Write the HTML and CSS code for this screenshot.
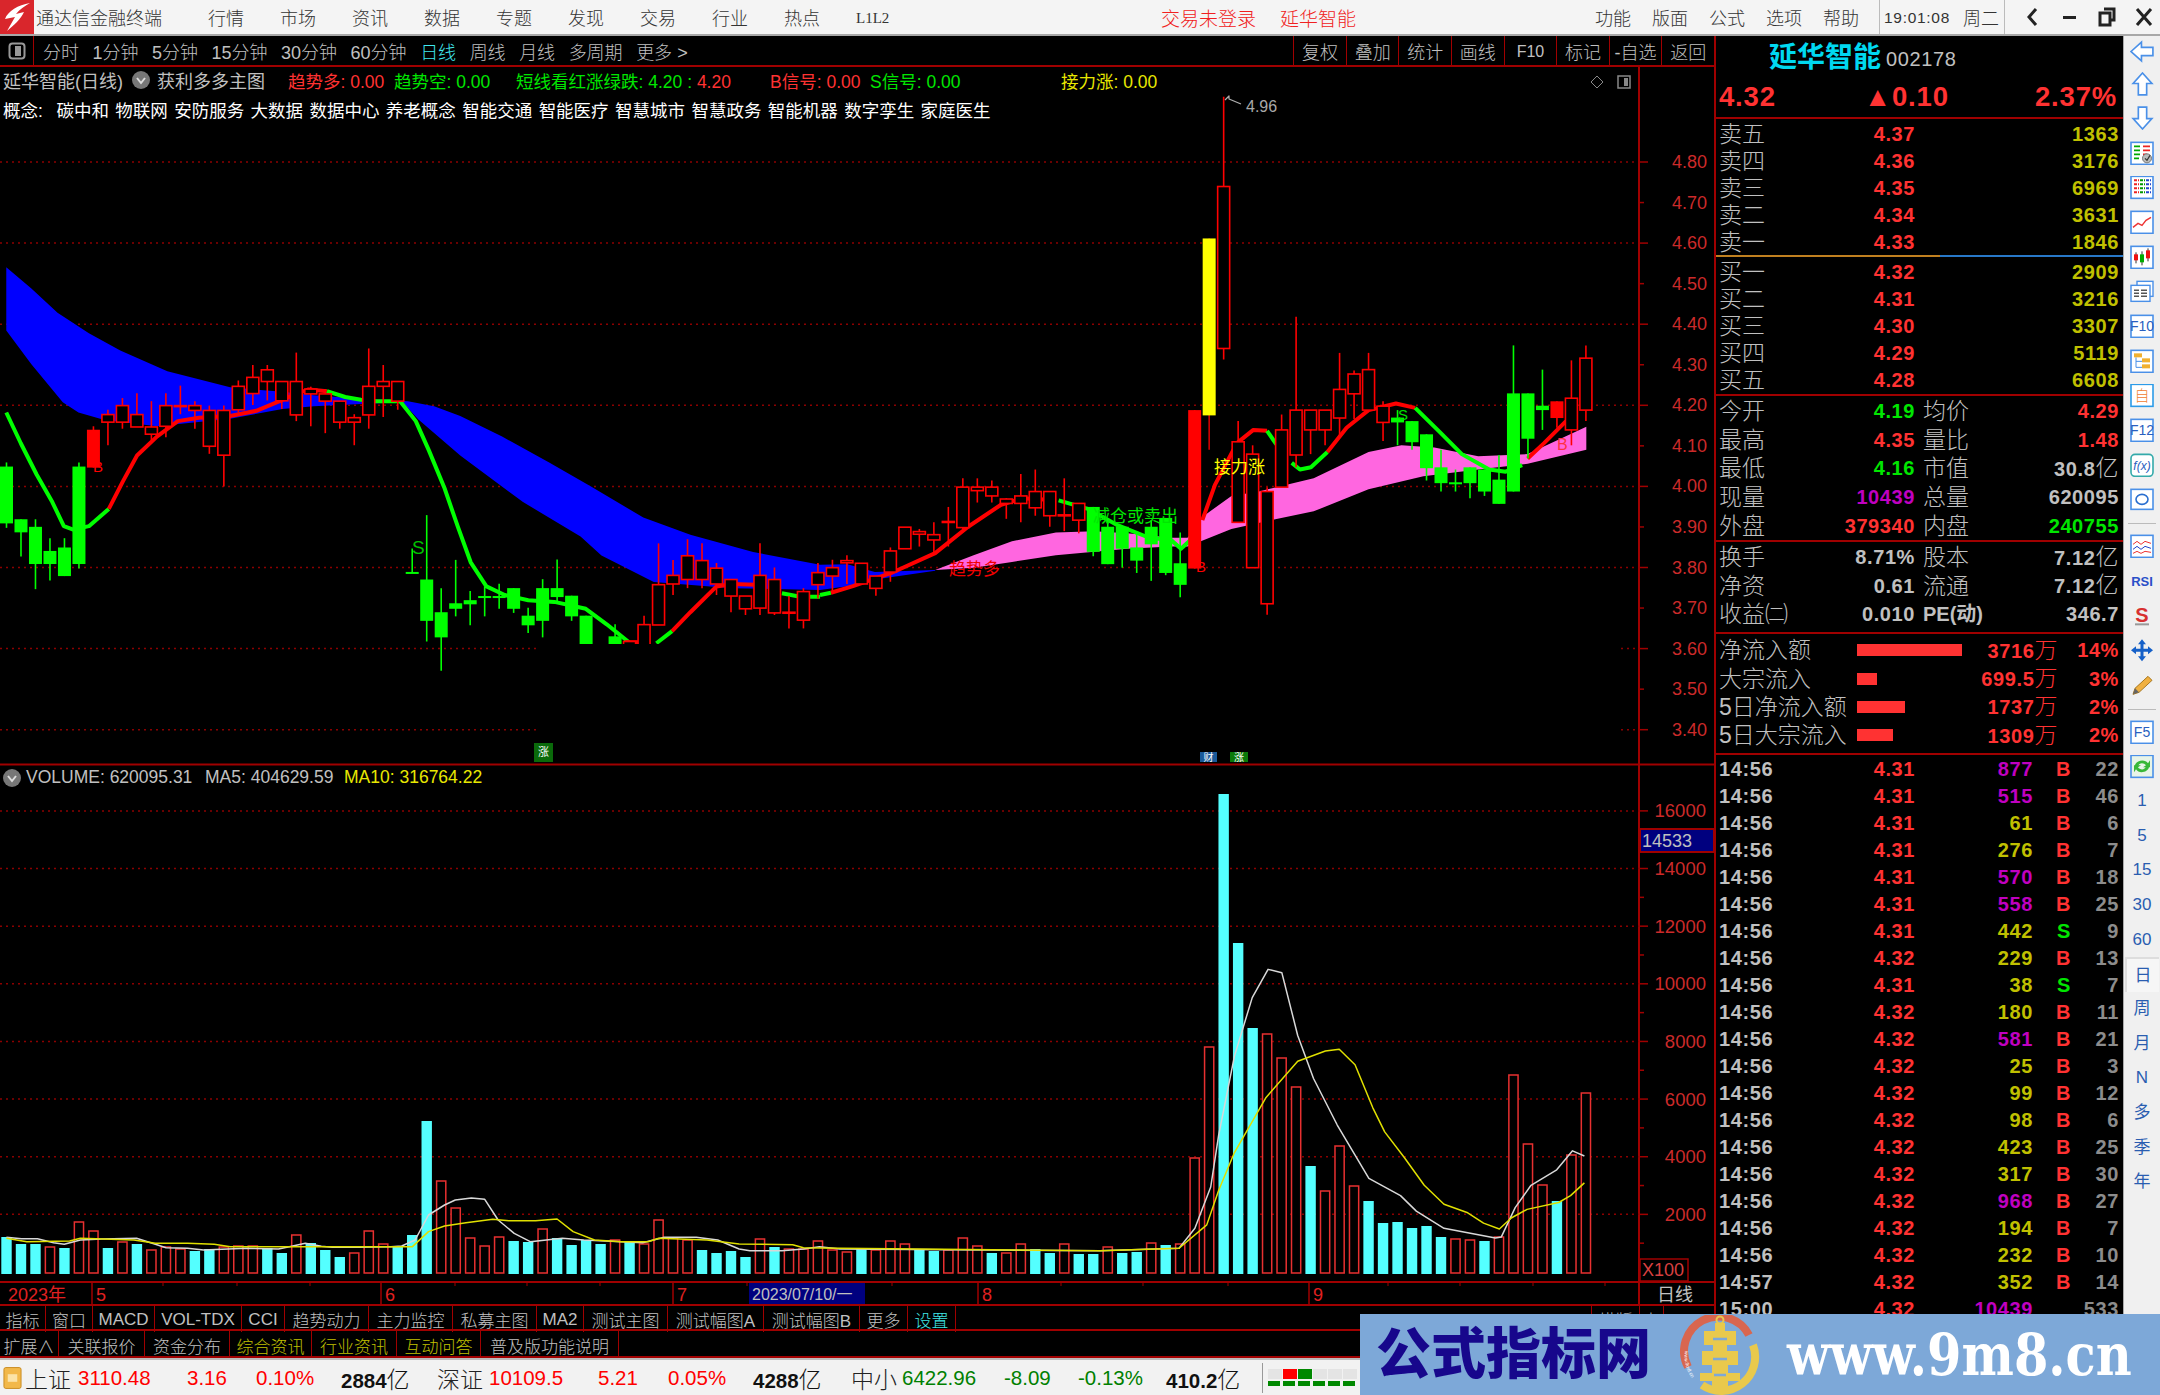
FILE: index.html
```html
<!DOCTYPE html>
<html lang="zh-CN">
<head>
  <meta charset="UTF-8" />
  <title>通达信金融终端</title>
  <link rel="stylesheet" href="styles.css">
</head>
<body>
  <div class="app">
    <header class="titlebar">
      <svg class="logo" viewBox="0 0 34 34">
        <rect width="34" height="34" fill="#d9262c"/>
        <path d="M30 3 C18 5 8 11 5 19 L15 17 L7 31 C14 25 21 19 24 12 L16 14 C20 9 25 6 30 3Z" fill="#fff"/>
      </svg>
      <span class="appname">通达信金融终端</span>
      <nav class="menu">
        <span>行情</span><span>市场</span><span>资讯</span><span>数据</span><span>专题</span>
        <span>发现</span><span>交易</span><span>行业</span><span>热点</span><span class="l1l2">L1L2</span>
      </nav>
      <div class="alerts"><span>交易未登录</span><span>延华智能</span></div>
      <nav class="menu menu-right">
        <span>功能</span><span>版面</span><span>公式</span><span>选项</span><span>帮助</span>
      </nav>
      <div class="clock"><span class="time">19:01:08</span><span>周二</span></div>
      <div class="winbtns">
        <svg viewBox="0 0 20 20"><path d="M13 2 L6 10 L13 18" fill="none" stroke="#222" stroke-width="3"/></svg>
        <svg viewBox="0 0 20 20"><rect x="3" y="9" width="13" height="3" fill="#222"/></svg>
        <svg viewBox="0 0 20 20"><path d="M7 2 H17 V13 H14 M3 6 H13 V18 H3 Z" fill="none" stroke="#222" stroke-width="3"/></svg>
        <svg viewBox="0 0 20 20"><path d="M3 2 L17 18 M17 2 L3 18" stroke="#222" stroke-width="3"/></svg>
      </div>
    </header>

    <div class="work">
      <main class="left">
        <div class="toolbar">
          <div class="panel-toggle"><svg viewBox="0 0 18 18"><rect x="1.5" y="1.5" width="15" height="15" rx="3" fill="none" stroke="#999" stroke-width="2"/><rect x="7" y="4" width="6" height="10" fill="#999"/></svg></div>
          <div class="periods">
            <span>分时</span><span>1分钟</span><span>5分钟</span><span>15分钟</span><span>30分钟</span><span>60分钟</span>
            <span class="on">日线</span><span>周线</span><span>月线</span><span>多周期</span><span>更多 &gt;</span>
          </div>
          <div class="tools">
            <span>复权</span><span>叠加</span><span>统计</span><span>画线</span><span class="latin">F10</span><span>标记</span><span>-自选</span><span>返回</span>
          </div>
        </div>

        <div class="chart">
          <svg id="plot" class="plot" width="1715" height="1239" viewBox="0 67 1715 1239"></svg>

          <div class="legend">
            <span class="gray">延华智能(日线)</span>
            <svg class="chev" viewBox="0 0 18 18"><circle cx="9" cy="9" r="9" fill="#777"/><path d="M5 7 L9 12 L13 7" fill="none" stroke="#ddd" stroke-width="2"/></svg>
            <span class="gray">获利多多主图</span>
            <span class="red">趋势多: 0.00</span>
            <span class="green">趋势空: 0.00</span>
            <span class="green">短线看红涨绿跌: 4.20 : <em class="red">4.20</em></span>
            <span class="red">B信号: 0.00</span>
            <span class="green">S信号: 0.00</span>
            <span class="yellow">接力涨: 0.00</span>
          </div>
          <div class="concepts">
            <span class="concepts-head">概念:</span><span>碳中和</span><span>物联网</span><span>安防服务</span><span>大数据</span><span>数据中心</span><span>养老概念</span>
            <span>智能交通</span><span>智能医疗</span><span>智慧城市</span><span>智慧政务</span><span>智能机器</span><span>数字孪生</span><span>家庭医生</span>
          </div>

          <div class="vol-legend">
            <svg class="chev" viewBox="0 0 18 18"><circle cx="9" cy="9" r="9" fill="#777"/><path d="M5 7 L9 12 L13 7" fill="none" stroke="#ddd" stroke-width="2"/></svg>
            <span class="gray">VOLUME: 620095.31</span>
            <span class="gray">MA5: 404629.59</span>
            <span class="yellow">MA10: 316764.22</span>
          </div>
        </div>

        <div class="tabs tabs-main">
          <span>指标</span><span>窗口</span><span>MACD</span><span>VOL-TDX</span><span>CCI</span><span>趋势动力</span><span>主力监控</span>
          <span>私募主图</span><span>MA2</span><span>测试主图</span><span>测试幅图A</span><span>测试幅图B</span><span>更多</span><span class="cyan">设置</span>
          <span class="spacer"></span><span>横版</span><span>上</span>
        </div>
        <div class="tabs tabs-sub">
          <span>扩展∧</span><span>关联报价</span><span>资金分布</span><span class="olive">综合资讯</span><span class="olive">行业资讯</span><span class="olive">互动问答</span><span>普及版功能说明</span>
        </div>
      </main>

      <aside class="quote">
        <div class="stock"><span class="stock-name">延华智能</span><span class="stock-code">002178</span></div>
        <div class="price-row"><span>4.32</span><span>▲0.10</span><span>2.37%</span></div>

        <section class="book asks">
          <div class="row"><label>卖五</label><b class="red">4.37</b><b class="olive">1363</b></div>
          <div class="row"><label>卖四</label><b class="red">4.36</b><b class="olive">3176</b></div>
          <div class="row"><label>卖三</label><b class="red">4.35</b><b class="olive">6969</b></div>
          <div class="row"><label>卖二</label><b class="red">4.34</b><b class="olive">3631</b></div>
          <div class="row"><label>卖一</label><b class="red">4.33</b><b class="olive">1846</b></div>
        </section>
        <section class="book bids">
          <div class="row"><label>买一</label><b class="red">4.32</b><b class="olive">2909</b></div>
          <div class="row"><label>买二</label><b class="red">4.31</b><b class="olive">3216</b></div>
          <div class="row"><label>买三</label><b class="red">4.30</b><b class="olive">3307</b></div>
          <div class="row"><label>买四</label><b class="red">4.29</b><b class="olive">5119</b></div>
          <div class="row"><label>买五</label><b class="red">4.28</b><b class="olive">6608</b></div>
        </section>

        <section class="stats">
          <div class="row"><label>今开</label><b class="green">4.19</b><label class="second">均价</label><b class="red">4.29</b></div>
          <div class="row"><label>最高</label><b class="red">4.35</b><label class="second">量比</label><b class="red">1.48</b></div>
          <div class="row"><label>最低</label><b class="green">4.16</b><label class="second">市值</label><b class="gray">30.8<i>亿</i></b></div>
          <div class="row"><label>现量</label><b class="purple">10439</b><label class="second">总量</label><b class="gray">620095</b></div>
          <div class="row"><label>外盘</label><b class="red">379340</b><label class="second">内盘</label><b class="green">240755</b></div>
        </section>
        <section class="stats finance">
          <div class="row"><label>换手</label><b class="gray">8.71%</b><label class="second">股本</label><b class="gray">7.12<i>亿</i></b></div>
          <div class="row"><label>净资</label><b class="gray">0.61</b><label class="second">流通</label><b class="gray">7.12<i>亿</i></b></div>
          <div class="row"><label>收益㈡</label><b class="gray">0.010</b><label class="second pe">PE(动)</label><b class="gray">346.7</b></div>
        </section>

        <section class="flows">
          <div class="row"><label>净流入额</label><div><i class="bar" style="width:105px"></i></div><b class="red">3716<i>万</i></b><b class="red">14%</b></div>
          <div class="row"><label>大宗流入</label><div><i class="bar" style="width:20px"></i></div><b class="red">699.5<i>万</i></b><b class="red">3%</b></div>
          <div class="row"><label>5日净流入额</label><div><i class="bar" style="width:48px"></i></div><b class="red">1737<i>万</i></b><b class="red">2%</b></div>
          <div class="row"><label>5日大宗流入</label><div><i class="bar" style="width:36px"></i></div><b class="red">1309<i>万</i></b><b class="red">2%</b></div>
        </section>

        <section class="trades">
          <div class="row"><b class="gray">14:56</b><b class="red">4.31</b><b class="purple">877</b><b class="red bs">B</b><b class="dim">22</b></div>
          <div class="row"><b class="gray">14:56</b><b class="red">4.31</b><b class="purple">515</b><b class="red bs">B</b><b class="dim">46</b></div>
          <div class="row"><b class="gray">14:56</b><b class="red">4.31</b><b class="olive">61</b><b class="red bs">B</b><b class="dim">6</b></div>
          <div class="row"><b class="gray">14:56</b><b class="red">4.31</b><b class="olive">276</b><b class="red bs">B</b><b class="dim">7</b></div>
          <div class="row"><b class="gray">14:56</b><b class="red">4.31</b><b class="purple">570</b><b class="red bs">B</b><b class="dim">18</b></div>
          <div class="row"><b class="gray">14:56</b><b class="red">4.31</b><b class="purple">558</b><b class="red bs">B</b><b class="dim">25</b></div>
          <div class="row"><b class="gray">14:56</b><b class="red">4.31</b><b class="olive">442</b><b class="green bs">S</b><b class="dim">9</b></div>
          <div class="row"><b class="gray">14:56</b><b class="red">4.32</b><b class="olive">229</b><b class="red bs">B</b><b class="dim">13</b></div>
          <div class="row"><b class="gray">14:56</b><b class="red">4.31</b><b class="olive">38</b><b class="green bs">S</b><b class="dim">7</b></div>
          <div class="row"><b class="gray">14:56</b><b class="red">4.32</b><b class="olive">180</b><b class="red bs">B</b><b class="dim">11</b></div>
          <div class="row"><b class="gray">14:56</b><b class="red">4.32</b><b class="purple">581</b><b class="red bs">B</b><b class="dim">21</b></div>
          <div class="row"><b class="gray">14:56</b><b class="red">4.32</b><b class="olive">25</b><b class="red bs">B</b><b class="dim">3</b></div>
          <div class="row"><b class="gray">14:56</b><b class="red">4.32</b><b class="olive">99</b><b class="red bs">B</b><b class="dim">12</b></div>
          <div class="row"><b class="gray">14:56</b><b class="red">4.32</b><b class="olive">98</b><b class="red bs">B</b><b class="dim">6</b></div>
          <div class="row"><b class="gray">14:56</b><b class="red">4.32</b><b class="olive">423</b><b class="red bs">B</b><b class="dim">25</b></div>
          <div class="row"><b class="gray">14:56</b><b class="red">4.32</b><b class="olive">317</b><b class="red bs">B</b><b class="dim">30</b></div>
          <div class="row"><b class="gray">14:56</b><b class="red">4.32</b><b class="purple">968</b><b class="red bs">B</b><b class="dim">27</b></div>
          <div class="row"><b class="gray">14:56</b><b class="red">4.32</b><b class="olive">194</b><b class="red bs">B</b><b class="dim">7</b></div>
          <div class="row"><b class="gray">14:56</b><b class="red">4.32</b><b class="olive">232</b><b class="red bs">B</b><b class="dim">10</b></div>
          <div class="row"><b class="gray">14:57</b><b class="red">4.32</b><b class="olive">352</b><b class="red bs">B</b><b class="dim">14</b></div>
          <div class="row"><b class="gray">15:00</b><b class="red">4.32</b><b class="purple">10439</b><b class="bs"></b><b class="dim">533</b></div>
        </section>
      </aside>

      <nav class="side">
        <div class="side-arrows">
          <svg viewBox="0 0 24 24"><path d="M1 12 L11 3 V8 H22 V16 H11 V21 Z" fill="#fff" stroke="#4a90e8" stroke-width="1.6"/></svg>
          <svg viewBox="0 0 24 24"><path d="M12 1 L21 11 H16 V22 H8 V11 H3 Z" fill="#fff" stroke="#4a90e8" stroke-width="1.6"/></svg>
          <svg viewBox="0 0 24 24"><path d="M12 23 L21 13 H16 V2 H8 V13 H3 Z" fill="#fff" stroke="#4a90e8" stroke-width="1.6"/></svg>
        </div>
        <svg class="ico" viewBox="0 0 24 24"><rect x="1" y="1" width="22" height="22" fill="#fff" stroke="#4a90e8" stroke-width="1.6"/><path d="M4 5 H10 M4 9 H10 M4 13 H10 M4 17 H9" stroke="#0a0" stroke-width="1.8"/><path d="M13 5 H20 M13 9 H20 M13 13 H17" stroke="#e22" stroke-width="1.8"/><circle cx="17" cy="17" r="4.5" fill="#bbb" stroke="#777"/><path d="M15 17 L17 19 L20 14" fill="none" stroke="#333" stroke-width="1.2"/></svg>
        <svg class="ico" viewBox="0 0 24 24"><rect x="1" y="1" width="22" height="22" fill="#fff" stroke="#4a90e8" stroke-width="1.6"/><g stroke-width="2" stroke-dasharray="3 1"><path d="M4 5 H9 M4 9 H9 M4 13 H9 M4 17 H9" stroke="#e22"/><path d="M10 5 H15 M10 9 H15 M10 13 H15 M10 17 H15" stroke="#090"/><path d="M16 5 H21 M16 9 H21 M16 13 H21 M16 17 H21" stroke="#24c"/></g></svg>
        <svg class="ico" viewBox="0 0 24 24"><rect x="1" y="1" width="22" height="22" fill="#fff" stroke="#4a90e8" stroke-width="1.6"/><path d="M3 17 L8 13 L12 15 L16 10 L21 7" fill="none" stroke="#e33" stroke-width="1.4"/></svg>
        <svg class="ico" viewBox="0 0 24 24"><rect x="1" y="1" width="22" height="22" fill="#fff" stroke="#4a90e8" stroke-width="1.6"/><path d="M6 7 V18 M12 6 V20 M18 3 V16" stroke="#333"/><rect x="4" y="9" width="4" height="6" fill="#e11"/><rect x="10" y="9" width="4" height="8" fill="#0a0"/><rect x="16" y="5" width="4" height="8" fill="#e11"/></svg>
        <svg class="ico" viewBox="0 0 24 24"><rect x="7" y="2" width="16" height="15" fill="#fff" stroke="#4a90e8" stroke-width="1.4"/><rect x="1" y="6" width="19" height="16" fill="#fff" stroke="#4a90e8" stroke-width="1.4"/><path d="M4 11 H9 M11 11 H17 M4 14 H9 M11 14 H17 M4 17 H9 M11 17 H17" stroke="#555" stroke-width="1.5"/></svg>
        <svg class="ico" viewBox="0 0 24 24"><rect x="1" y="1" width="22" height="22" fill="#fff" stroke="#4a90e8" stroke-width="1.6"/><text class="ico-text" x="12" y="17" fill="#2a5fc0" font-size="14">F10</text></svg>
        <svg class="ico" viewBox="0 0 24 24"><rect x="1" y="1" width="22" height="22" fill="#fff" stroke="#4a90e8" stroke-width="1.6"/><path d="M6 8 V18 H12 M6 12 H12" fill="none" stroke="#4a90e8"/><rect x="4" y="4" width="8" height="4" fill="#f0b030"/><rect x="12" y="9" width="8" height="4" fill="#f0b030"/><rect x="12" y="15" width="8" height="4" fill="#f0b030"/></svg>
        <svg class="ico" viewBox="0 0 24 24"><rect x="1" y="1" width="22" height="22" fill="#fff" stroke="#2b9be8" stroke-width="1.6"/><text class="ico-text" x="12" y="18" fill="#f08030" font-size="15">自</text></svg>
        <svg class="ico" viewBox="0 0 24 24"><rect x="1" y="1" width="22" height="22" fill="#fff" stroke="#4a90e8" stroke-width="1.6"/><text class="ico-text" x="12" y="17" fill="#2a5fc0" font-size="14">F12</text></svg>
        <svg class="ico" viewBox="0 0 24 24"><rect x="1" y="1" width="22" height="22" rx="4" fill="#fff" stroke="#3aa" stroke-width="1.6"/><text class="ico-text" x="12" y="17" fill="#2a5fc0" font-size="12" font-style="italic">f(x)</text></svg>
        <svg class="ico" viewBox="0 0 24 24"><rect x="1" y="2" width="22" height="20" fill="#fff" stroke="#4a90e8" stroke-width="1.6"/><ellipse cx="12" cy="12" rx="6" ry="5" fill="none" stroke="#2a6fd0" stroke-width="1.6"/></svg>
        <div class="side-sep"></div>
        <svg class="ico" viewBox="0 0 24 24"><rect x="1" y="1" width="22" height="22" fill="#fff" stroke="#4a90e8" stroke-width="1.6"/><path d="M3 10 L7 7 L11 10 L15 7 L21 9" fill="none" stroke="#e33"/><path d="M3 15 L7 12 L11 15 L15 12 L21 14" fill="none" stroke="#24c"/><path d="M3 19 L7 17 L11 19 L15 17 L21 18" fill="none" stroke="#e33"/></svg>
        <svg class="ico" viewBox="0 0 24 24"><text class="ico-text" x="12" y="17" fill="#2a4fc8" font-size="13" font-weight="700">RSI</text></svg>
        <svg class="ico" viewBox="0 0 24 24"><text class="ico-text" x="12" y="19" fill="#d83030" font-size="20" font-weight="700">S</text><path d="M5 21 H19" stroke="#999" stroke-width="2"/></svg>
        <svg class="ico" viewBox="0 0 24 24"><path d="M12 1 L16 6 H13.5 V10.5 H18 V8 L23 12 L18 16 V13.5 H13.5 V18 H16 L12 23 L8 18 H10.5 V13.5 H6 V16 L1 12 L6 8 V10.5 H10.5 V6 H8 Z" fill="#1560c8"/></svg>
        <svg class="ico" viewBox="0 0 24 24"><path d="M3 21 L5 15 L18 3 L22 7 L9 19 Z" fill="#f0b040" stroke="#a87820"/><path d="M3 21 L5 15 L9 19 Z" fill="#666"/></svg>
        <div class="side-sep"></div>
        <svg class="ico" viewBox="0 0 24 24"><rect x="1" y="1" width="22" height="22" fill="#fff" stroke="#4a90e8" stroke-width="1.6"/><text class="ico-text" x="12" y="17" fill="#2a5fc0" font-size="14">F5</text></svg>
        <svg class="ico" viewBox="0 0 24 24"><rect x="1" y="1" width="22" height="22" fill="#e8f4e8" stroke="#4a90e8" stroke-width="1.6"/><path d="M5 11 C6 6 15 4 18 9 L20 6 V13 H13 L16 11 C14 8 9 8 8 12 Z M19 13 C18 18 9 20 6 15 L4 18 V11 H11 L8 13 C10 16 15 16 16 12 Z" fill="#38b838"/></svg>
        <span class="side-num">1</span><span class="side-num">5</span><span class="side-num">15</span><span class="side-num">30</span><span class="side-num">60</span>
        <span class="side-num raised">日</span><span class="side-num">周</span><span class="side-num">月</span><span class="side-num">N</span><span class="side-num">多</span><span class="side-num">季</span><span class="side-num">年</span>
      </nav>
    </div>

    <footer class="statusbar">
      <svg class="status-ico" viewBox="0 0 20 24"><rect x="1" y="1" width="18" height="22" rx="2" fill="#f2b84a" stroke="#c88a20"/><rect x="5" y="8" width="10" height="8" fill="#fbe3a8"/></svg>
      <span class="cjk">上证</span><span class="up">3110.48</span><span class="up">3.16</span><span class="up">0.10%</span><span class="amt">2884<i>亿</i></span>
      <span class="cjk">深证</span><span class="up">10109.5</span><span class="up">5.21</span><span class="up">0.05%</span><span class="amt">4288<i>亿</i></span>
      <span class="cjk">中小</span><span class="down">6422.96</span><span class="down">-8.09</span><span class="down">-0.13%</span><span class="amt">410.2<i>亿</i></span>
      <div class="meter">
        <i></i><i class="m-red"></i><i class="m-green"></i><i></i><i></i><i></i>
        <b></b><b></b><b></b><b></b><b></b><b></b>
      </div>
    </footer>

    <div class="watermark">
      <span class="wm-title">公式指标网</span>
      <svg class="wm-logo" viewBox="0 0 80 80">
        <path d="M8 52 A34 34 0 0 1 69 20" fill="none" stroke="#d8664f" stroke-width="8"/>
        <path d="M73 30 A34 34 0 0 1 22 70" fill="none" stroke="#e9c94c" stroke-width="8"/>
        <circle cx="40" cy="5" r="3.5" fill="none" stroke="#e9c94c" stroke-width="2"/>
        <path d="M35 8 H45 V16 H56 V30 H47 V36 H58 V50 H48 V58 H60 V66 H48 V76 H32 V66 H20 V58 H32 V50 H22 V36 H33 V30 H24 V16 H35Z" fill="#e9c94c"/>
        <path d="M33 24 H47 M33 44 H47 M34 60 H46" stroke="#7da8d8" stroke-width="2.5"/>
        <path id="wm-curve" d="M5 36 A36 36 0 0 0 28 75" fill="none"/>
        <text class="wm-tiny"><textPath href="#wm-curve">www.9m8.cn</textPath></text>
      </svg>
      <span class="wm-url">www.9m8.cn</span>
    </div>
  </div>

  <script src="chart.js"></script>
</body>
</html>
```

FILE: styles.css
```css
html, body {
  margin: 0;
  height: 100%;
  background: #000;
}
body {
  font-family: "Liberation Sans", "Noto Sans CJK SC", sans-serif;
  font-weight: 300;
  color: #c0c0c0;
  overflow: hidden;
}
i, em {
  font-style: normal;
}
.app {
  position: relative;
  width: 2160px;
  height: 1395px;
  display: flex;
  flex-direction: column;
  overflow: hidden;
}
.red { color: #ff3232; }
.green { color: #00e600; }
.yellow { color: #e8e800; }
.olive { color: #c0c000; }
.cyan { color: #40e8e8; }
.gray { color: #c0c0c0; }
.dim { color: #8c8c8c; }
.purple { color: #c000c0; }

/* title bar */
.titlebar {
  height: 34px;
  flex: none;
  border-bottom: 2px solid #a8a8a8;
  background: #f4f4f4;
  color: #333;
  display: flex;
  align-items: center;
  font-size: 18px;
}
.logo {
  width: 34px;
  height: 34px;
  flex: none;
}
.appname {
  margin-left: 2px;
}
.menu {
  display: flex;
  align-items: center;
  gap: 36px;
  margin-left: 46px;
}
.l1l2 {
  width: 36px;
  padding-top: 3px;
  font-family: "Liberation Serif", serif;
  font-size: 15px;
}
.menu-right {
  gap: 21px;
  margin-left: 239px;
}
.alerts {
  display: flex;
  gap: 24px;
  margin-left: 269px;
  color: #f02020;
  font-size: 19px;
}
.clock {
  display: flex;
  align-items: center;
  gap: 13px;
  height: 34px;
  margin-left: 20px;
  padding: 0 5px 0 4px;
  border-left: 1px solid #bbb;
  border-right: 1px solid #bbb;
}
.time {
  font-size: 15.5px;
  letter-spacing: 0.7px;
  padding-top: 2px;
}
.winbtns {
  display: flex;
  gap: 17px;
  margin-left: 18px;
}
.winbtns svg {
  width: 20px;
  height: 20px;
}

/* main area */
.work {
  flex: 1;
  display: flex;
  min-height: 0;
}
.left {
  width: 1714px;
  flex: none;
  display: flex;
  flex-direction: column;
}

.toolbar {
  height: 29px;
  flex: none;
  display: flex;
  align-items: center;
  border-bottom: 2px solid #a00000;
  font-size: 18px;
}
.panel-toggle {
  width: 34px;
  height: 29px;
  display: flex;
  align-items: center;
  justify-content: center;
  border-right: 1px solid #a00000;
  box-sizing: border-box;
}
.panel-toggle svg {
  width: 18px;
  height: 18px;
}
.periods {
  display: flex;
  gap: 13.5px;
  margin-left: 9px;
}
.periods .on {
  color: #40e8f0;
}
.tools {
  display: flex;
  margin-left: auto;
  height: 29px;
}
.tools span {
  width: 52.6px;
  box-sizing: border-box;
  border-left: 1px solid #a00000;
  display: flex;
  align-items: center;
  justify-content: center;
}
.tools .latin {
  padding-top: 3px;
  font-size: 16px;
}

.chart {
  position: relative;
  height: 1239px;
  flex: none;
  font-size: 17.5px;
  font-weight: 400;
}
.plot {
  position: absolute;
  left: 0;
  top: 0;
  display: block;
}
.plot text {
  font-family: "Liberation Sans", "Noto Sans CJK SC", sans-serif;
}
.legend {
  position: relative;
  display: grid;
  grid-template-columns: 129px 25px 131px 106px 122px 254px 100px 191px 1fr;
  align-items: center;
  height: 26px;
  padding-left: 3px;
  white-space: nowrap;
}
.legend > .gray {
  font-size: 18px;
}
.chev {
  width: 18px;
  height: 18px;
}
.concepts {
  position: relative;
  display: flex;
  gap: 6.4px;
  margin-top: 4px;
  padding-left: 3px;
  color: #fff;
  font-size: 17.5px;
  white-space: nowrap;
}
.concepts-head {
  width: 47px;
}
.vol-legend {
  position: absolute;
  left: 3px;
  top: 700px;
  display: grid;
  grid-template-columns: 23px 179px 139px auto;
  align-items: center;
  font-size: 17.5px;
  white-space: nowrap;
}

.tabs {
  flex: none;
  display: grid;
  align-items: stretch;
  font-size: 17px;
  border-bottom: 2px solid #a00000;
  box-sizing: border-box;
}
.tabs span {
  display: flex;
  align-items: center;
  justify-content: center;
  border-right: 1px solid #a00000;
  white-space: nowrap;
  padding-top: 1px;
}
.tabs-main {
  height: 25px;
  grid-template-columns: 46px 47px 62px 87px 43px 84px 84px 84px 47px 84px 96px 96px 48px 48px 636px 48px 24px;
}
.tabs-sub {
  height: 27px;
  grid-template-columns: 59px 86px 85px 82px 85px 84px 138px;
}
.tabs-sub span {
  padding-top: 2px;
}

/* quote panel */
.quote {
  width: 409px;
  flex: none;
  box-sizing: border-box;
  border-left: 2px solid #a00000;
  overflow: hidden;
}
.stock {
  height: 37px;
  display: flex;
  align-items: flex-end;
  padding-left: 53px;
}
.stock-name {
  color: #00d8f0;
  font-size: 28px;
  font-weight: 700;
  line-height: 30px;
}
.stock-code {
  margin-left: 5px;
  font-size: 20px;
  line-height: 27px;
  letter-spacing: 0.6px;
}
.price-row {
  height: 46px;
  box-sizing: border-box;
  padding: 8px 6px 0 3px;
  display: grid;
  grid-template-columns: 145px 171px 1fr;
  border-bottom: 2px solid #a00000;
  color: #ff3232;
  font-size: 27.5px;
  line-height: 32px;
  font-weight: 700;
  letter-spacing: 0.8px;
}
.price-row span:last-child {
  text-align: right;
}
.quote b {
  font-weight: 700;
  font-size: 20px;
  line-height: 22px;
  letter-spacing: 0.6px;
  text-align: right;
  white-space: nowrap;
}
.quote b i {
  font-size: 23px;
  font-weight: 300;
  line-height: 22px;
}
.quote label {
  font-size: 23px;
  font-weight: 300;
  line-height: 24px;
  white-space: nowrap;
}
.quote section {
  padding-left: 3px;
  box-sizing: border-box;
}
.row {
  display: grid;
  align-items: center;
  height: 27px;
}
.book .row {
  grid-template-columns: 100px 96px 204px;
}
.asks {
  padding-top: 1.5px;
  height: 138px;
  border-bottom: 2px solid;
  border-image: linear-gradient(to right, #c08020 224px, #2878c8 224px) 1;
}
.bids {
  padding-top: 1.5px;
  height: 139px;
  border-bottom: 2px solid #a00000;
}
.stats .row {
  height: 28.6px;
  grid-template-columns: 100px 96px 60px 144px;
}
.second {
  padding-left: 8px;
}
.quote .pe {
  font-size: 20px;
  font-weight: 700;
}
.stats {
  height: 146px;
  padding-top: 1px;
  border-bottom: 2px solid #a00000;
}
.stats.finance {
  height: 92px;
}
.flows {
  height: 121px;
  padding-top: 2px;
  border-bottom: 2px solid #a00000;
}
.flows .row {
  height: 28.4px;
  grid-template-columns: 138px 105px 96px 61px;
}
.bar {
  display: block;
  height: 12px;
  background: #ff3232;
}
.trades .row {
  grid-template-columns: 100px 96px 118px 38px 48px;
}
.trades b:first-child {
  text-align: left;
}

/* right icon strip */
.side {
  width: 37px;
  flex: none;
  background: #f0f0f0;
  border-left: 1px solid #aaa;
  box-sizing: border-box;
  display: flex;
  flex-direction: column;
  align-items: center;
}
.side-arrows {
  display: flex;
  flex-direction: column;
  margin-top: -1.5px;
  margin-bottom: 2px;
}
.side-arrows svg {
  width: 25px;
  height: 25px;
  padding: 4px 0;
}
.ico {
  width: 24px;
  height: 24px;
  flex: none;
  padding: 5.35px 0;
}
.ico-text {
  text-anchor: middle;
}
.side-sep {
  width: 28px;
  height: 12px;
  flex: none;
  box-sizing: border-box;
  border-bottom: 1px solid #bbb;
  transform: translateY(-5px);
}
.side-num {
  height: 34.7px;
  flex: none;
  line-height: 34.7px;
  color: #2a5db0;
  font-size: 17px;
  font-weight: 400;
}
.side-num.raised {
  width: 34px;
  text-align: center;
  background: #f6f6f6;
  border-top: 2px solid #ddd;
  border-left: 2px solid #ddd;
  box-sizing: border-box;
}

/* status bar */
.statusbar {
  height: 37px;
  flex: none;
  box-sizing: border-box;
  border-top: 2px solid #bbb;
  background: #f2f2f2;
  padding-left: 3px;
  display: grid;
  grid-template-columns: 22px 53px 109px 69px 85px 96px 52px 109px 70px 85px 98px 51px 102px 74px 88px 96px auto;
  align-items: center;
  font-size: 20.5px;
  white-space: nowrap;
}
.status-ico {
  width: 19px;
  height: 24px;
}
.statusbar .cjk {
  color: #222;
  font-size: 23px;
}
.up {
  color: #ff0000;
}
.down {
  color: #008000;
}
.amt {
  color: #111;
  font-weight: 700;
}
.amt i {
  font-size: 23px;
  font-weight: 300;
}
.meter {
  display: grid;
  grid-template-columns: repeat(6, 14px);
  gap: 2px 1px;
  height: 30px;
  align-content: center;
  padding-left: 5px;
  border-left: 1px solid #999;
}
.meter i {
  height: 10px;
  background: #e4e4e4;
}
.meter .m-red { background: #f00; }
.meter .m-green { background: #080; }
.meter b {
  height: 5px;
  margin-right: 2px;
  background: #080;
}

/* site watermark over the bottom right corner */
.watermark {
  position: absolute;
  left: 1360px;
  right: 0;
  top: 1314px;
  bottom: 0;
  background: #7da8d8;
  display: flex;
  align-items: center;
}
.wm-title {
  flex: none;
  margin-left: 16px;
  color: #17078c;
  font-size: 55px;
  font-weight: 900;
  line-height: 1;
  white-space: nowrap;
}
.wm-logo {
  flex: none;
  width: 80px;
  height: 80px;
  margin-left: 29px;
}
.wm-tiny {
  fill: #fff;
  font-size: 5px;
}
.wm-url {
  flex: none;
  margin-left: 27px;
  color: #fff;
  font-family: "DejaVu Serif", serif;
  font-size: 49.5px;
  font-weight: 700;
  white-space: nowrap;
  transform: scaleY(1.18);
}
```

FILE: chart.js
```js
// Day chart of 002178. All numbers were traced off the screen, so they are
// stored in the units of the trace and turned into page pixels here.
const svg = document.getElementById('plot');

const RED = '#a00000';
const GRID = '#8c0000';
const AXIS = '#cc2a2a';

const priceY = p => 162 + (4.8 - p) * 405.5;
const volY = v => 1272 - v * 0.02882;
const barX = i => 6.5 + i * 14.49;

const fromLeft = ([x, y]) => [x / 1.912, 230 + y / 2.904];
const fromRight = ([x, y]) => [820 + x / 1.823, 80 + y / 2.272];
const fromVolLeft = ([x, y]) => [x / 1.867, 1050 + y / 3];
const fromVolRight = ([x, y]) => [1100 + x / 2.529, 760 + y / 2.904];

// hi, body top, body bottom, lo, kind (g green, r hollow red, R solid red, y yellow)
const candlesLeft = [
  [675, 687, 852, 865, 'g'], [840, 840, 878, 948, 'g'], [840, 862, 970, 1043, 'g'], [895, 932, 970, 1018, 'g'],
  [895, 922, 1005, 1005, 'g'], [675, 687, 970, 983, 'g'], [570, 580, 690, 690, 'R'], [522, 536, 558, 625, 'r'],
  [488, 510, 558, 577, 'r'], [474, 536, 572, 572, 'r'], [497, 572, 593, 610, 'r'], [474, 510, 570, 602, 'r'],
  [452, 510, 512, 535, 'r'], [497, 510, 524, 577, 'r'], [510, 524, 628, 650, 'r'], [510, 524, 654, 745, 'r'],
  [437, 454, 522, 530, 'r'], [392, 428, 475, 508, 'r'], [392, 406, 440, 495, 'r'], [440, 440, 496, 520, 'r'],
  [356, 440, 537, 555, 'r'], [455, 462, 476, 570, 'r'], [462, 476, 497, 590, 'r'], [497, 497, 558, 577, 'r'],
  [535, 545, 558, 625, 'r'], [344, 454, 537, 577, 'r'], [392, 440, 454, 543, 'r'], [440, 440, 497, 522, 'r'],
  [925, 993, 996, 996, 'g'], [828, 1015, 1135, 1195, 'g'], [1040, 1110, 1183, 1280, 'g'], [958, 1084, 1100, 1122, 'g'],
  [1048, 1075, 1087, 1148, 'g'], [1035, 1063, 1066, 1122, 'g'], [1027, 1063, 1066, 1100, 'g'], [1040, 1040, 1100, 1112, 'g'],
  [1097, 1120, 1148, 1170, 'g'], [1014, 1040, 1135, 1183, 'g'], [957, 1040, 1066, 1080, 'g'], [1062, 1062, 1122, 1135, 'g'],
  [1120, 1120, 1240, 1240, 'g'], [1300, 1300, 1300, 1300, 'g'], [1145, 1180, 1240, 1240, 'g'], [1195, 1195, 1240, 1240, 'r'],
  [1120, 1146, 1240, 1240, 'r'], [910, 1030, 1147, 1147, 'r'], [958, 1003, 1028, 1060, 'r'], [898, 946, 1015, 1040, 'r'],
  [910, 960, 1015, 1040, 'r'], [967, 982, 1028, 1060, 'r'], [1015, 1015, 1063, 1110, 'r'], [1063, 1063, 1100, 1118, 'r'],
  [910, 1003, 1098, 1118, 'r'], [980, 1015, 1112, 1118, 'r'], [1063, 1110, 1112, 1157, 'r'], [1040, 1050, 1133, 1157, 'r'],
  [967, 995, 1030, 1070, 'r'],
];
const candlesRight = [
  [1090, 1108, 1127, 1165, 'r'], [1080, 1092, 1097, 1145, 'r'], [1098, 1098, 1145, 1145, 'r'], [1127, 1127, 1155, 1172, 'r'],
  [1062, 1070, 1118, 1140, 'r'], [1016, 1016, 1065, 1065, 'r'], [1020, 1026, 1032, 1060, 'r'], [1005, 1033, 1045, 1075, 'r'],
  [970, 1003, 1005, 1060, 'r'], [905, 925, 1017, 1020, 'r'], [905, 925, 933, 960, 'r'], [910, 925, 945, 960, 'r'],
  [950, 952, 962, 997, 'r'], [895, 945, 962, 1005, 'r'], [885, 935, 972, 990, 'r'], [935, 935, 990, 1015, 'r'],
  [905, 988, 990, 1025, 'r'], [962, 962, 1000, 1030, 'r'], [970, 970, 1072, 1082, 'g'], [1000, 1015, 1100, 1100, 'g'],
  [1015, 1015, 1065, 1108, 'g'], [1030, 1062, 1092, 1120, 'g'], [1000, 1015, 1055, 1138, 'g'], [995, 995, 1120, 1125, 'g'],
  [1028, 1098, 1147, 1175, 'g'], [750, 750, 1110, 1110, 'R'], [360, 360, 762, 840, 'y'], [38, 242, 610, 635, 'r'],
  [775, 822, 1005, 1005, 'r'], [830, 850, 1108, 1108, 'r'], [925, 935, 1190, 1215, 'r'], [760, 795, 925, 925, 'r'],
  [538, 750, 852, 880, 'r'], [750, 750, 795, 850, 'r'], [750, 750, 795, 830, 'r'], [620, 703, 768, 810, 'r'],
  [660, 668, 713, 770, 'r'], [620, 658, 750, 750, 'r'], [730, 741, 778, 820, 'r'], [750, 767, 778, 830, 'g'],
  [775, 775, 823, 840, 'g'], [805, 805, 882, 910, 'g'], [840, 880, 916, 935, 'g'], [885, 914, 916, 935, 'g'],
  [880, 880, 916, 950, 'g'], [885, 885, 935, 945, 'g'], [852, 908, 963, 963, 'g'], [603, 712, 935, 935, 'g'],
  [712, 712, 815, 860, 'g'], [658, 740, 750, 795, 'g'], [730, 730, 768, 790, 'R'], [637, 723, 795, 830, 'r'],
  [603, 632, 750, 775, 'r'],
];

// tops of the volume bars in page pixels, c cyan (down day) / r red (up day)
const volumes = [
  [1237, 'c'], [1244, 'c'], [1244, 'c'], [1247, 'r'], [1248, 'c'], [1222, 'r'], [1231, 'r'], [1248, 'c'], [1242, 'r'], [1244, 'c'],
  [1250, 'r'], [1247, 'r'], [1249, 'r'], [1251, 'c'], [1249, 'c'], [1247, 'r'], [1246, 'r'], [1246, 'r'], [1248, 'c'], [1253, 'c'],
  [1235, 'r'], [1243, 'c'], [1250, 'c'], [1257, 'c'], [1253, 'r'], [1231, 'r'], [1244, 'r'], [1247, 'c'], [1235, 'c'], [1121, 'c'],
  [1181, 'r'], [1208, 'r'], [1238, 'r'], [1246, 'r'], [1237, 'r'], [1241, 'c'], [1242, 'c'], [1229, 'r'], [1238, 'c'], [1245, 'c'],
  [1240, 'c'], [1244, 'c'], [1240, 'r'], [1242, 'c'], [1244, 'r'], [1220, 'r'], [1238, 'r'], [1240, 'r'], [1250, 'c'], [1253, 'c'],
  [1251, 'c'], [1257, 'c'], [1239, 'r'], [1247, 'c'], [1249, 'r'], [1249, 'r'], [1241, 'r'], [1250, 'r'], [1252, 'r'], [1249, 'c'],
  [1250, 'r'], [1241, 'r'], [1244, 'r'], [1250, 'c'], [1251, 'c'], [1250, 'r'], [1238, 'r'], [1246, 'r'], [1253, 'c'], [1253, 'r'],
  [1244, 'r'], [1249, 'c'], [1253, 'c'], [1244, 'r'], [1254, 'c'], [1254, 'c'], [1247, 'r'], [1253, 'c'], [1252, 'c'], [1243, 'r'],
  [1245, 'c'], [1244, 'r'], [1158, 'r'], [1047, 'r'], [794, 'c'], [943, 'c'], [1028, 'c'], [1034, 'r'], [1058, 'r'], [1087, 'r'],
  [1166, 'c'], [1191, 'r'], [1146, 'r'], [1186, 'r'], [1201, 'c'], [1223, 'c'], [1222, 'c'], [1228, 'c'], [1226, 'c'], [1237, 'c'],
  [1239, 'r'], [1240, 'r'], [1241, 'c'], [1237, 'r'], [1075, 'r'], [1144, 'r'], [1185, 'r'], [1201, 'c'], [1155, 'r'], [1093, 'r'],
];

const blueBand = [
  ...[[12, 108], [60, 170], [110, 240], [170, 300], [230, 350], [320, 410], [440, 457], [540, 470], [600, 480], [690, 490], [780, 497],
    [830, 512], [880, 540], [960, 600], [1050, 675], [1130, 745], [1230, 835], [1320, 885], [1440, 935], [1568, 972]].map(fromLeft),
  ...[[50, 1100], [100, 1118], [210, 1113], [210, 1115], [100, 1135], [50, 1150], [0, 1159]].map(fromRight),
  ...[[1400, 1040], [1250, 1022], [1150, 945], [1110, 890], [1000, 790], [880, 655], [800, 550], [770, 500], [690, 505], [600, 512],
    [540, 520], [440, 548], [300, 570], [200, 552], [150, 530], [120, 500], [60, 390], [12, 292]].map(fromLeft),
];
const pinkBand = [
  [210, 1113], [280, 1080], [350, 1048], [430, 1028], [500, 1025], [560, 1030], [640, 1040], [670, 1040], [700, 990], [750, 945], [800, 935],
  [900, 905], [1000, 845], [1060, 830], [1120, 835], [1200, 855], [1290, 850], [1397, 788],
  [1397, 840], [1290, 872], [1200, 885], [1100, 900], [1000, 930], [900, 980], [830, 998], [750, 1020], [700, 1045], [670, 1060],
  [640, 1060], [560, 1065], [500, 1072], [430, 1080], [350, 1095], [280, 1108],
].map(fromRight);

const trendLeft = [
  ['#00ff00', [[12, 530], [40, 620], [70, 710], [100, 790], [122, 860], [140, 870], [170, 860], [208, 810]]],
  ['#ff0000', [[208, 810], [235, 730], [262, 655], [300, 600], [340, 555], [380, 545], [440, 540], [490, 525], [530, 500], [560, 480], [590, 463], [625, 468]]],
  ['#00ff00', [[625, 468], [660, 485], [690, 493], [720, 497], [765, 497], [795, 555], [820, 640], [850, 750], [875, 860], [900, 965], [930, 1035], [965, 1060], [1010, 1075], [1060, 1080], [1120, 1100], [1160, 1145], [1205, 1200]]],
  ['#ff0000', [[1195, 1197], [1222, 1197]]],
  ['#00ff00', [[1255, 1200], [1285, 1165]]],
  ['#ff0000', [[1285, 1165], [1320, 1110], [1370, 1035], [1400, 1028], [1445, 1030]]],
  ['#00ff00', [[1495, 1055], [1530, 1065], [1568, 1065]]],
];
const trendRight = [
  ['#00ff00', [[0, 1170], [20, 1165]]],
  ['#ff0000', [[20, 1165], [60, 1150], [130, 1120], [210, 1075], [270, 1015], [330, 965], [370, 950], [430, 955]]],
  ['#00ff00', [[435, 955], [490, 975], [540, 1010], [600, 1040], [640, 1045], [658, 1065], [680, 1040]]],
  ['#ff0000', [[697, 1000], [720, 920], [760, 825], [790, 795], [815, 797]]],
  ['#00ff00', [[815, 797], [832, 828]]],
  ['#00ff00', [[860, 870], [875, 885], [895, 880], [925, 845]]],
  ['#ff0000', [[925, 845], [960, 790], [1000, 750], [1050, 735], [1085, 745]]],
  ['#00ff00', [[1085, 745], [1130, 800], [1170, 850], [1220, 885], [1250, 890], [1280, 875]]],
  ['#ff0000', [[1290, 860], [1320, 825], [1360, 775]]],
];

const ma5 = [
  ...[[12, 562], [40, 566], [70, 566], [100, 578], [120, 583], [150, 570], [190, 567], [255, 565], [290, 583], [310, 593], [350, 595], [380, 600],
    [460, 595], [520, 597], [540, 590], [570, 580], [600, 589], [620, 592], [670, 592], [730, 590], [750, 588], [775, 570], [800, 495], [830, 465],
    [850, 450], [880, 444], [905, 448], [930, 510], [960, 550], [990, 575], [1050, 565], [1090, 570], [1130, 573], [1200, 578], [1240, 562],
    [1300, 562], [1340, 570], [1380, 597], [1400, 602], [1460, 602], [1500, 597], [1530, 590], [1568, 597]].map(fromVolLeft),
  ...[[0, 1425], [200, 1418], [240, 1360], [280, 1240], [300, 1090], [340, 860], [385, 690], [425, 608], [460, 618], [500, 800], [540, 925], [600, 1060],
    [680, 1215], [760, 1265], [800, 1310], [870, 1360], [1000, 1388], [1015, 1385], [1050, 1300], [1090, 1235], [1155, 1190], [1195, 1135], [1225, 1150]].map(fromVolRight),
];
const ma10 = [
  ...[[12, 565], [50, 575], [130, 573], [150, 565], [250, 570], [290, 580], [350, 580], [400, 583], [430, 590], [770, 590], [800, 545], [830, 528],
    [870, 518], [920, 508], [950, 512], [1000, 512], [1040, 507], [1070, 545], [1110, 570], [1160, 575], [1210, 575], [1230, 565], [1320, 570],
    [1380, 582], [1480, 584], [1500, 593], [1568, 595]].map(fromVolLeft),
  ...[[0, 1425], [200, 1418], [270, 1350], [300, 1250], [340, 1140], [420, 980], [500, 875], [570, 845], [605, 840], [645, 885], [690, 1010], [720, 1080],
    [770, 1155], [820, 1235], [870, 1290], [930, 1315], [970, 1345], [1010, 1362], [1040, 1330], [1080, 1305], [1160, 1285], [1190, 1265], [1225, 1228]].map(fromVolRight),
];

let out = '';

const rect = (x, y, w, h, fill, stroke, sw) => {
  out += `<rect x="${x}" y="${y}" width="${w}" height="${h}" fill="${fill}"${stroke ? ` stroke="${stroke}" stroke-width="${sw}"` : ''}/>`;
};
const seg = (x1, y1, x2, y2, color, width = 2, dash) => {
  out += `<line x1="${x1}" y1="${y1}" x2="${x2}" y2="${y2}" stroke="${color}" stroke-width="${width}"${dash ? ` stroke-dasharray="${dash}"` : ''}/>`;
};
const poly = (pts, color, width) => {
  out += `<polyline points="${pts.map(p => p.join(',')).join(' ')}" fill="none" stroke="${color}" stroke-width="${width}" stroke-linejoin="round"/>`;
};
const area = (pts, fill) => {
  out += `<polygon points="${pts.map(p => p.join(',')).join(' ')}" fill="${fill}"/>`;
};
const label = (x, y, txt, fill, size, anchor = 'start') => {
  out += `<text x="${x}" y="${y}" fill="${fill}" font-size="${size}" text-anchor="${anchor}" dominant-baseline="central">${txt}</text>`;
};

function candle(i, [hi, top, bot, lo, kind], toY) {
  const x = barX(i);
  const yHi = toY(hi), yTop = toY(top), yBot = toY(bot), yLo = toY(lo);
  const color = { g: '#00ff00', r: '#ff0000', R: '#ff0000', y: '#d00000' }[kind];
  seg(x, yHi, x, yLo, color, 1.6);
  if (kind === 'r') {
    rect(x - 6, yTop, 12, Math.max(yBot - yTop, 1), '#000', '#ff0000', 1.6);
  } else {
    const fill = kind === 'y' ? '#ffff00' : color;
    rect(x - 6.5, yTop, 13, Math.max(yBot - yTop, 2), fill);
  }
}

// grid of the price pane; the lower two lines only show at the far ends
[4.8, 4.6, 4.4, 4.2, 4.0, 3.8].forEach(p => seg(0, priceY(p), 1638, priceY(p), GRID, 1.5, '2 4'));
[3.6, 3.4].forEach(p => {
  seg(0, priceY(p), 539, priceY(p), GRID, 1.5, '2 4');
  seg(1621, priceY(p), 1638, priceY(p), GRID, 1.5, '2 4');
});

area(blueBand, '#0000ff');
area(pinkBand, '#ff66e0');
trendLeft.forEach(([c, pts]) => poly(pts.map(fromLeft), c, 4));
trendRight.forEach(([c, pts]) => poly(pts.map(fromRight), c, 4));

const leftY = y => fromLeft([0, y])[1];
const rightY = y => fromRight([0, y])[1];
candlesLeft.forEach((c, i) => candle(i, c, leftY));
candlesRight.forEach((c, i) => candle(i + 57, c, rightY));

// the bottom of the price pane is blanked out in the middle on the screen
rect(539, 644, 1082, 118, '#000');

label(1214, 467, '接力涨', '#ffff00', 17);
label(1093, 516, '减仓或卖出', '#00e600', 17);
label(949, 569, '趋势多', '#f00000', 17);
label(412, 547, 'S', '#00c000', 19);
label(93, 466, 'B', '#ff0000', 15);
label(1196, 566, 'B', '#ff0000', 15);
label(1398, 414, 'S', '#00e000', 15);
label(1557, 444, 'B', '#ff3040', 16);
poly([[1225, 100], [1229, 96], [1229, 99], [1241, 104]], '#b0b0b0', 1.2);
label(1246, 106, '4.96', '#a8a8a8', 16);

out += '<path d="M1597 76 L1603 82 L1597 88 L1591 82 Z" fill="none" stroke="#888"/>';
rect(1618, 76, 12, 12, '#000', '#888', 1.5);
rect(1624, 78, 4, 8, '#888');

rect(534, 743, 19, 19, '#0a6a0a');
label(543.5, 752, '涨', '#fff', 11, 'middle');
rect(1200, 752, 17, 10, '#1a5a9a');
label(1208.5, 757, '财', '#fff', 10, 'middle');
rect(1230, 752, 18, 10, '#0a7a0a');
label(1239, 757, '涨', '#fff', 10, 'middle');

// price axis
seg(1639, 67, 1639, 1306, RED, 2);
for (let k = 0; k <= 14; k++) {
  const p = 4.8 - k * 0.1;
  seg(1639, priceY(p), k % 2 ? 1644 : 1648, priceY(p), RED, 1.5);
  label(1707, priceY(p), p.toFixed(2), AXIS, 18, 'end');
}
seg(0, 764.5, 1714, 764.5, RED, 2);

// volume pane
[2000, 4000, 6000, 8000, 10000, 12000, 14000, 16000].forEach(v => {
  seg(0, volY(v), 1639, volY(v), GRID, 1.5, '2 4');
  seg(1639, volY(v), 1648, volY(v), RED, 1.5);
  seg(1639, volY(v - 1000), 1644, volY(v - 1000), RED, 1.5);
  label(1706, volY(v), String(v), AXIS, 18.5, 'end');
});
volumes.forEach(([top, kind], i) => {
  const x = barX(i);
  if (kind === 'c') rect(x - 5.2, top, 10.4, 1274 - top, '#54ffff');
  else rect(x - 4.6, top, 9.2, 1273 - top, '#000', '#e83030', 1.5);
});
poly(ma5, '#d8d8d8', 1.5);
poly(ma10, '#e0e000', 1.5);

rect(1640, 829, 74, 23, '#00007f', RED, 2);
label(1642, 840.5, '14533', '#c0c0c0', 18);
rect(1640, 1259, 48, 22, '#000', RED, 1.5);
label(1642, 1270, 'X100', '#d84040', 18);

// time axis
seg(0, 1282, 1714, 1282, RED, 2);
seg(0, 1305, 1714, 1305, RED, 2);
[92, 381, 673, 978, 1309].forEach(x => seg(x, 1282, x, 1305, RED, 1.5));
[163, 237, 310, 455, 527, 600, 747, 820, 892, 1061, 1143, 1228, 1388, 1460, 1533, 1605].forEach(x => seg(x, 1282, x, 1286, RED, 1));
label(8, 1295, '2023年', '#e02020', 18);
label(96, 1295, '5', '#e02020', 18);
label(385, 1295, '6', '#e02020', 18);
label(677, 1295, '7', '#e02020', 18);
label(982, 1295, '8', '#e02020', 18);
label(1313, 1295, '9', '#e02020', 18);
rect(749, 1283, 116, 21, '#00007f');
label(752, 1294, '2023/07/10/一', '#c0c0c0', 16);
label(1675, 1295, '日线', '#c0c0c0', 18, 'middle');

svg.innerHTML = out;
```
